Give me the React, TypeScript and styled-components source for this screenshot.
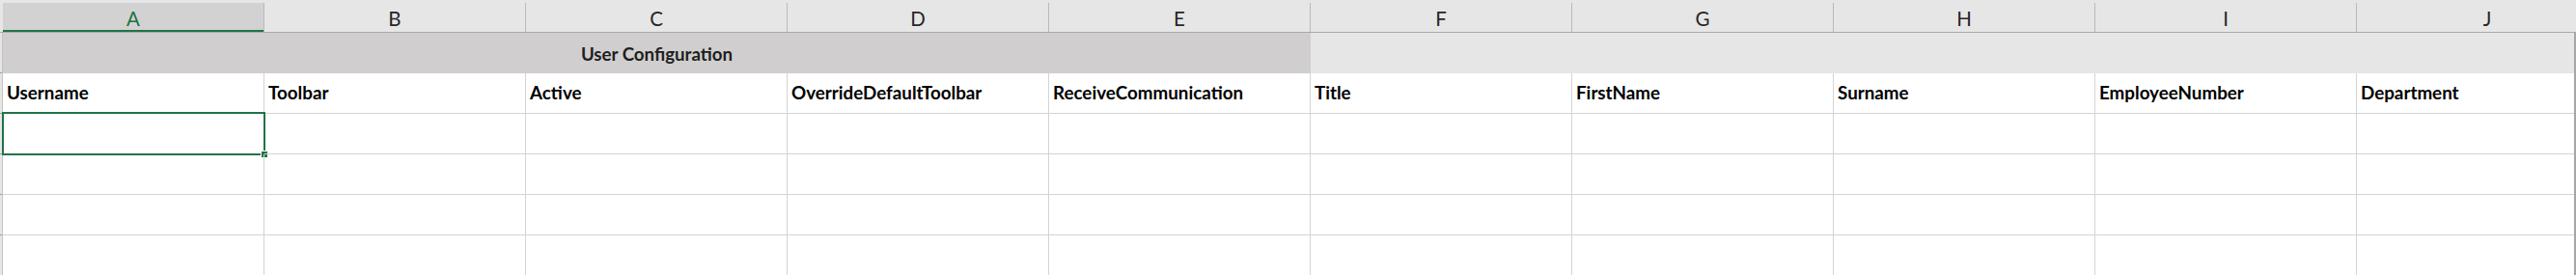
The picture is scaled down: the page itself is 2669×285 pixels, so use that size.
import styled, { createGlobalStyle } from 'styled-components';

const GlobalStyle = createGlobalStyle`
  html, body {
    margin: 0;
    padding: 0;
    background: #ffffff;
    overflow: hidden;
  }
  body {
    font-family: Lato, "Liberation Sans", sans-serif;
  }
`;

const COL_W = 271;
const ROW_H = 42;
const GREEN = '#217346';

const columns = ['A', 'B', 'C', 'D', 'E', 'F', 'G', 'H', 'I', 'J'];
const fields = [
  'Username',
  'Toolbar',
  'Active',
  'OverrideDefaultToolbar',
  'ReceiveCommunication',
  'Title',
  'FirstName',
  'Surname',
  'EmployeeNumber',
  'Department',
];

const Sheet = styled.div`
  width: 2669px;
  height: 285px;
  overflow: hidden;
  display: flex;
  flex-direction: column;
`;

const HeaderBar = styled.div`
  display: flex;
  flex-shrink: 0;
  padding: 3px 0 0 3px;
  background: #e6e6e6;
  border-bottom: 1px solid #a9a9a9;
`;

const ColHead = styled.div<{ $active?: boolean }>`
  width: ${COL_W}px;
  height: 30px;
  flex-shrink: 0;
  box-sizing: border-box;
  display: flex;
  align-items: center;
  justify-content: center;
  padding-top: 2px;
  font-size: 20.5px;
  color: ${(p) => (p.$active ? GREEN : '#262626')};
  background: ${(p) => (p.$active ? '#d2d2d2' : 'transparent')};
  border-right: 1px solid #b9b9b9;
  box-shadow: ${(p) => (p.$active ? `inset 0 -2px 0 ${GREEN}` : 'none')};
`;

const Body = styled.div`
  flex: 1;
  min-height: 0;
  display: flex;
  overflow: hidden;
  border-right: 2px solid #a6a6a6;
`;

const Gutter = styled.div`
  width: 3px;
  flex-shrink: 0;
  box-sizing: border-box;
  background: #e6e6e6;
  border-right: 1px solid #c4c4c4;
`;

const GutterCell = styled.div`
  height: ${ROW_H}px;
  box-sizing: border-box;
  border-bottom: 1px solid #9e9e9e;
`;

const Grid = styled.div`
  display: flex;
  flex-direction: column;
`;

const Row = styled.div`
  display: flex;
  height: ${ROW_H}px;
  flex-shrink: 0;
`;

const Band = styled.div<{ $span: number; $fill: string }>`
  width: ${(p) => p.$span * COL_W}px;
  flex-shrink: 0;
  box-sizing: border-box;
  display: flex;
  align-items: center;
  justify-content: center;
  padding-top: 2px;
  background: ${(p) => p.$fill};
  font-size: 18.7px;
  font-weight: 700;
  color: #1e1e1e;
`;

const Cell = styled.div<{ $selected?: boolean }>`
  position: relative;
  width: ${COL_W}px;
  flex-shrink: 0;
  box-sizing: border-box;
  display: flex;
  align-items: flex-end;
  padding: 0 4px 10px;
  border-right: 1px solid #d4d4d4;
  border-bottom: 1px solid #d4d4d4;
  font-size: 18.8px;
  font-weight: 700;
  color: #000;
  white-space: nowrap;

  ${(p) =>
    p.$selected &&
    `
    &::before {
      content: '';
      position: absolute;
      left: -1px;
      top: -2px;
      right: -2px;
      bottom: -2px;
      border: 2px solid ${GREEN};
      pointer-events: none;
    }
    &::after {
      content: '';
      position: absolute;
      right: -5px;
      bottom: -5px;
      width: 6px;
      height: 6px;
      background: ${GREEN};
      border: 1px solid #fff;
    }
  `}
`;

export default function App() {
  return (
    <>
      <GlobalStyle />
      <Sheet>
        <HeaderBar>
          {columns.map((c) => (
            <ColHead key={c} $active={c === 'A'}>
              {c}
            </ColHead>
          ))}
        </HeaderBar>
        <Body>
          <Gutter>
            {[0, 1, 2, 3, 4, 5].map((i) => (
              <GutterCell key={i} />
            ))}
          </Gutter>
          <Grid>
            <Row>
              <Band $span={5} $fill="#d0cece">
                User Configuration
              </Band>
              <Band $span={5} $fill="#e7e6e6" />
            </Row>
            <Row>
              {fields.map((f) => (
                <Cell key={f}>{f}</Cell>
              ))}
            </Row>
            {[0, 1, 2, 3].map((r) => (
              <Row key={r}>
                {columns.map((c) => (
                  <Cell key={c} $selected={r === 0 && c === 'A'} />
                ))}
              </Row>
            ))}
          </Grid>
        </Body>
      </Sheet>
    </>
  );
}
